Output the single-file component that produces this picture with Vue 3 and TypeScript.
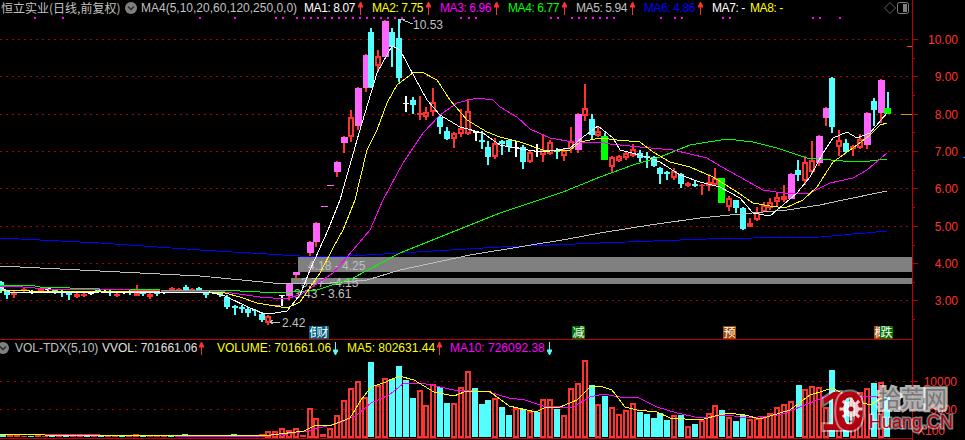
<script setup lang="ts">
type Kind = 'h' | 'p' | 'c' | 'w' | 'g' | 'r'
type Candle = [number, Kind, number, number, number, number]

const candles: Candle[] = [
  [1,'c',282,290,281,293],[7,'c',291,295,290,299],[14,'r',292,295,291,298],[24,'r',289,291,288,292],[32,'w',291,293,290,294],[41,'r',289,292,288,293],
  [48,'w',288,290,287,292],[55,'c',290,292,289,294],[62,'c',291,293,290,297],[69,'c',292,295,291,300],[77,'r',294,297,293,298],[84,'r',294,296,293,297],
  [91,'w',292,294,291,295],[98,'c',289,291,288,292],[105,'w',291,292,290,293],[110,'c',291,293,290,296],[117,'r',294,296,293,297],[124,'w',292,293,291,294],
  [130,'c',291,293,290,295],[137,'r',290,296,285,296],[143,'c',292,294,291,296],[150,'r',294,297,292,299],[157,'c',292,294,291,296],[164,'w',291,293,290,294],
  [172,'r',288,291,287,292],[179,'r',289,291,288,292],[186,'c',287,290,285,291],[192,'r',289,291,288,292],[199,'c',288,291,287,293],[206,'c',292,295,291,298],
  [213,'w',291,293,290,294],[220,'c',293,295,292,297],[227,'c',297,307,295,309],[235,'c',306,308,305,315],[242,'c',307,309,305,313],[248,'c',309,313,307,317],
  [255,'c',310,311,309,316],[262,'c',314,320,312,322],[268,'h',316,323,315,325],[276,'p',305,306,305,306],[282,'w',295,296,295,306],[289,'p',284,296,283,300],
  [296,'p',272,275,272,278],[303,'p',256,257,256,257],[310,'p',242,253,241,258],[316,'p',223,242,222,247],[324,'p',206,207,206,207],[330,'p',185,186,185,186],
  [337,'p',162,172,161,177],[344,'p',137,143,136,153],[351,'h',117,137,110,142],[358,'p',88,126,87,130],[366,'p',55,88,54,92],[371,'c',32,87,28,88],
  [378,'h',56,66,50,72],[385,'p',21,57,20,57],[392,'c',32,47,28,67],[399,'c',38,78,19,82],[406,'w',103,104,96,112],[413,'c',100,105,97,114],
  [420,'r',113,115,96,120],[426,'h',112,117,107,120],[433,'h',102,112,88,116],[440,'c',117,127,114,134],[447,'c',131,139,127,140],[454,'h',133,139,132,148],
  [461,'h',128,134,109,137],[468,'h',111,134,99,135],[476,'w',131,133,131,141],[482,'c',140,142,131,149],[488,'c',147,157,141,165],[495,'h',143,157,138,159],
  [502,'c',141,144,140,155],[509,'c',140,147,139,152],[516,'w',147,148,141,157],[523,'c',147,162,145,169],[530,'h',152,162,150,163],[537,'w',151,152,144,157],
  [543,'h',150,155,134,162],[550,'h',142,154,140,155],[557,'c',150,152,148,159],[564,'h',150,156,148,161],[571,'h',141,149,127,153],[578,'p',114,150,113,153],
  [585,'h',108,116,84,121],[592,'c',119,135,114,140],[598,'h',131,136,126,137],[605,'g',136,160,133,160],[612,'h',157,167,156,172],[619,'h',156,161,155,162],
  [626,'h',153,158,152,160],[633,'h',149,156,144,157],[640,'c',153,158,150,162],[647,'c',156,158,152,168],[654,'c',157,166,156,167],[660,'c',168,174,167,184],
  [667,'c',172,174,171,180],[674,'h',171,178,168,180],[681,'c',174,184,173,188],[688,'r',183,186,182,187],[695,'c',184,186,180,187],[702,'r',185,186,184,195],
  [709,'h',182,186,174,191],[715,'h',178,185,168,185],[722,'g',178,203,178,203],[729,'h',198,207,196,211],[736,'c',200,208,200,213],[743,'c',208,229,207,230],
  [750,'r',223,227,218,227],[757,'h',212,220,207,221],[764,'h',205,212,202,212],[770,'h',202,208,198,210],[777,'h',197,202,193,207],[784,'h',196,200,185,202],
  [791,'p',174,199,173,199],[798,'c',170,175,160,181],[805,'h',162,181,156,185],[812,'h',160,172,141,174],[819,'p',136,163,135,166],[826,'p',108,118,107,126],
  [832,'c',78,127,77,133],[839,'h',140,147,130,156],[846,'c',143,152,139,153],[853,'h',146,149,145,156],[860,'h',139,148,134,149],[867,'p',113,145,112,149],
  [874,'c',101,110,98,126],[881,'p',80,113,79,123],[888,'g',108,114,92,114],
]

const line = (p: number[]): string => p.reduce((s, v, i) => s + v + (i % 2 ? ' ' : ','), '')

const maLines = [
  { cls: 'blue', pts: line([0,238,100,243,200,250,250,253,300,256,350,256,400,253,500,247,600,243,707,239,753,238,820,237,887,231]) },
  { cls: 'gray', pts: line([0,266,100,271,200,276,273,283,330,283,367,280,400,270,470,255,568,239,600,233,650,225,700,218,740,214,787,210,820,205,843,200,887,191]) },
  { cls: 'green', pts: line([0,285,30,285,40,287,100,289,160,290,240,291,280,293,317,290,353,278,400,253,500,213,530,203,563,192,600,177,633,165,660,157,690,145,727,139,753,142,777,148,807,158,843,161,870,161,887,159]) },
  { cls: 'magenta', pts: line([0,286,10,286,60,290,100,289,160,291,225,292,260,297,285,299,300,295,333,273,353,250,370,230,383,200,403,163,423,133,440,115,457,103,477,98,493,100,500,107,517,117,530,129,550,138,573,142,600,142,610,144,640,147,673,150,707,158,720,166,740,177,763,190,783,193,810,193,830,183,853,178,867,170,887,153]) },
  { cls: 'yellow', pts: line([0,290,30,291,100,291,160,292,225,293,240,297,257,303,287,308,300,302,320,273,333,248,343,230,355,200,367,150,377,130,387,103,397,85,413,73,422,72,437,80,450,100,467,120,487,132,500,137,520,142,543,150,570,150,580,142,600,138,617,140,640,142,653,152,670,162,690,167,713,177,737,192,753,203,770,206,785,208,803,200,817,187,833,162,853,148,870,135,880,125,887,123]) },
  { cls: 'white', pts: line([0,287,10,292,40,292,60,293,100,292,160,293,210,292,225,296,250,308,262,313,275,313,287,311,300,295,310,270,328,230,340,200,359,133,377,73,392,46,400,50,415,78,427,100,440,115,460,127,483,133,500,145,520,149,543,152,570,148,583,137,598,126,613,138,620,150,647,157,660,162,680,175,700,182,720,187,740,198,753,213,770,216,783,205,797,193,810,177,823,153,833,138,847,132,857,138,870,133,887,113]) },
]

const dots = [34,62,199,234,275,282,296,303,310,317,324,331,338,345,352,359,366,373,380,387,394,401,413,460,468,475,550,557,571,578,585,592,599,606,613,660,674,681,722,729,812,819,839]
const grid = [39,76,114,151,188,226,263,300]
const labels = [['10.00',39],['9.00',76],['8.00',114],['7.00',151],['6.00',188],['5.00',226],['4.00',263],['3.00',300]] as [string, number][]
const minor = [58,95,132,170,207,245,282,319]

const bands = [
  { x: 298, y: 257, h: 15 },
  { x: 291, y: 278, h: 6 },
]
const rangeTexts = [
  { x: 308, y: 270, t: '4.18 - 4.25' },
  { x: 301, y: 287, t: '3.77 - 4.15' },
  { x: 294, y: 298, t: '3.43 - 3.61' },
]
const markers = [
  { x: 309, w: 13, c: 'teal', t: '倒' },
  { x: 316, w: 13, c: 'teal', t: '财' },
  { x: 572, w: 13, c: 'leaf', t: '减' },
  { x: 723, w: 13, c: 'rust', t: '预' },
  { x: 874, w: 13, c: 'rust', t: '概' },
  { x: 880, w: 13, c: 'leaf', t: '跌' },
]

const maItems = [
  { label: 'MA1: 8.07', cls: 'white' },
  { label: 'MA2: 7.75', cls: 'yellow' },
  { label: 'MA3: 6.96', cls: 'magenta' },
  { label: 'MA4: 6.77', cls: 'green' },
  { label: 'MA5: 5.94', cls: 'gray' },
  { label: 'MA6: 4.86', cls: 'blue' },
]

type Bar = [number, 0 | 1, number]
const smallBars: Bar[] = [
  [3,1,434],[10,0,435],[17,0,435],[24,0,436],[31,1,436],[38,0,435],[45,0,436],[52,1,436],[59,0,435],[66,1,436],[73,0,435],[80,0,435],[87,1,436],[94,0,436],[101,1,435],
  [108,0,435],[115,0,435],[122,1,436],[129,0,435],[136,0,434],[143,1,435],[150,0,435],[157,0,435],[164,0,436],[171,1,435],[178,0,436],[185,1,434],[192,0,436],[199,0,435],[206,1,436],
  [213,0,436],[220,1,436],[227,1,435],[234,1,434],[241,1,436],[248,1,437],[255,0,435],[262,0,434],[268,0,431],
]
const bars: Bar[] = [
  ...smallBars,
  [275,0,431],[282,0,428],[289,0,430],[296,0,428],[303,0,435],[310,0,408],[316,0,418],[323,0,434],[330,0,428],[337,0,415],[344,0,400],[351,0,388],[358,0,381],[365,0,397],
  [371,1,362],[378,0,385],[385,0,378],[392,1,379],[399,1,366],[406,1,380],[413,1,398],[420,0,390],[426,0,405],[433,0,384],[440,1,387],[447,1,403],[454,0,403],[461,0,387],
  [468,0,371],[475,1,388],[482,1,404],[488,1,400],[495,0,398],[502,1,407],[509,1,415],[516,0,408],[523,1,409],[530,0,411],[537,1,412],[543,0,399],[550,0,399],[557,1,409],
  [564,0,415],[571,0,388],[578,0,383],[585,0,360],[592,1,385],[598,0,404],[605,1,396],[612,0,407],[619,0,414],[626,0,410],[633,0,403],[640,1,412],[647,1,414],[654,1,418],
  [660,1,413],[667,1,420],[674,0,415],[681,1,415],[688,0,426],[695,1,424],[702,0,420],[709,0,413],[715,0,405],[722,1,410],[729,0,417],[736,1,421],[743,1,415],[750,0,419],
  [757,0,418],[763,0,417],[770,0,413],[777,0,407],[784,0,404],[791,0,401],[799,1,385],[805,0,389],[812,0,386],[819,0,387],[826,0,407],[832,1,370],[839,0,392],[846,1,398],
  [853,0,400],[860,0,392],[867,0,388],[874,1,383],[881,0,382],[887,1,397],
]
const volYellow = line([0,434,45,435,250,435,271,435,304,431,314,426,332,425,350,418,361,400,371,387,386,382,399,376,414,380,434,392,454,396,464,392,489,391,509,406,536,412,546,407,560,407,577,400,590,387,600,386,612,390,625,407,637,410,657,412,670,418,700,420,727,413,745,415,760,419,790,410,810,395,833,388,853,400,870,405,882,398])
const volMagenta = line([0,434,45,434,100,435,250,437,286,434,307,431,339,423,357,415,371,403,389,395,404,383,421,383,454,390,489,392,509,398,525,400,543,406,560,407,573,407,590,397,603,394,620,397,637,397,657,407,677,413,700,418,727,415,747,418,780,415,810,403,830,395,853,396,877,397])

const gearTeeth = [0, 45, 90, 135, 180, 225, 270, 315]
</script>

<template>
  <div class="screen">
    <section class="pane">
      <header class="head">
        <span class="title">恒立实业(日线,前复权)</span>
        <svg class="drop" width="12" height="12" viewBox="0 0 12 12"><circle cx="6" cy="6" r="6" fill="#808080" /><path d="M3 4.5 6 7.5 9 4.5" fill="none" stroke="#303030" stroke-width="1.6" /></svg>
        <span class="formula">MA4(5,10,20,60,120,250,0,0)</span>
        <span v-for="m in maItems" :key="m.label" class="ma" :class="m.cls">
          <span class="tight">{{ m.label }}</span>
          <svg class="arrow" width="5" height="13" viewBox="0 0 5 13"><path d="M2.5 13V1M0 5 2.5 0 5 5Z" fill="#ff3232" stroke="#ff3232" /></svg>
        </span>
        <span class="ma short white"><span class="tight">MA7: -</span></span>
        <span class="ma short yellow"><span class="tight">MA8: -</span></span>
        <span class="tools">
          <svg width="12" height="12" viewBox="0 0 12 12"><path d="M6 .5 11.5 6 6 11.5 .5 6Z" fill="none" stroke="#606060" /></svg>
          <svg width="12" height="12" viewBox="0 0 12 12"><rect x=".5" y=".5" width="11" height="11" rx="2" fill="none" stroke="#808080" /><rect x="6" y="2" width="4" height="8" fill="#808080" /></svg>
        </span>
      </header>
      <svg class="canvas" width="965" height="324" viewBox="0 16 965 324">
        <line v-for="y in grid" :key="y" class="dot-grid" x1="0" :y1="y" x2="912" :y2="y" />
        <rect v-for="b in bands" :key="b.y" class="band" :x="b.x" :y="b.y" :width="912 - b.x" :height="b.h" />
        <text v-for="r in rangeTexts" :key="r.t" class="range" :x="r.x" :y="r.y">{{ r.t }}</text>
        <rect v-for="d in dots" :key="d" class="top-dot" :x="d" y="17" width="2" height="2" />
        <g v-for="c in candles" :key="c[0]">
          <rect :class="'w-' + c[1]" :x="c[0] - 1" :y="c[4]" width="2" :height="c[5] - c[4]" />
          <rect v-if="c[1] === 'h'" class="hollow" :x="c[0] - 2" :y="c[2] + 1" width="4" :height="c[3] - c[2] - 2" />
          <rect v-else-if="c[1] === 'p'" class="pink" :x="c[0] - 3" :y="c[2]" width="7" :height="c[3] - c[2]" />
          <rect v-else-if="c[1] === 'g'" class="lime" :x="c[0] - 4" :y="c[2]" width="7" :height="c[3] - c[2]" />
          <rect v-else :class="'b-' + c[1]" :x="c[0] - 3" :y="c[2]" width="6" :height="c[3] - c[2]" />
        </g>
        <polyline v-for="l in maLines" :key="l.cls" class="ma-line" :class="'s-' + l.cls" :points="l.pts" />
        <text class="range" x="413" y="29">10.53</text>
        <path class="pointer" d="M400 19 413 24M400 19V23M400 19H405" />
        <text class="range" x="282" y="327">2.42</text>
        <path class="pointer" d="M270 322H280M270 322 273 320M270 322 273 324" />
        <g v-for="m in markers" :key="m.t">
          <rect :class="m.c" :x="m.x" y="326" :width="m.w" height="13" />
          <text class="marker" :x="m.x + 0.5" y="337">{{ m.t }}</text>
        </g>
        <line class="now" x1="901" y1="114" x2="912" y2="114" />
        <line class="axis" x1="0" y1="339.5" x2="912" y2="339.5" />
        <line class="axis" x1="912.5" y1="16" x2="912.5" y2="340" />
        <line v-for="y in grid" :key="'t' + y" class="axis" x1="912" :y1="y" x2="918" :y2="y" />
        <line v-for="y in minor" :key="'m' + y" class="axis" x1="912" :y1="y" x2="915" :y2="y" />
        <line class="bright" x1="907" y1="46" x2="912" y2="46" />
        <text v-for="l in labels" :key="l[0]" class="tick" x="958" :y="l[1] + 4.5">{{ l[0] }}</text>
        <line class="blue-mark" x1="963" y1="157.5" x2="965" y2="157.5" />
      </svg>
    </section>
    <section class="pane">
      <header class="head vol">
        <svg class="drop-vol" width="9" height="12" viewBox="3 0 9 12"><circle cx="6" cy="6" r="6" fill="#808080" /><path d="M3 4.5 6 7.5 9 4.5" fill="none" stroke="#303030" stroke-width="1.6" /></svg>
        <span class="formula">VOL-TDX(5,10)</span>
        <span class="v vvol gray-w"><span>VVOL: 701661.06</span><svg class="arrow" width="5" height="13" viewBox="0 0 5 13"><path d="M2.5 13V1M0 5 2.5 0 5 5Z" fill="#ff3232" stroke="#ff3232" /></svg></span>
        <span class="v volume yellow"><span>VOLUME: 701661.06</span><svg class="arrow" width="5" height="13" viewBox="0 0 5 13"><path d="M2.5 0V12M0 8 2.5 13 5 8Z" fill="#54ffff" stroke="#54ffff" /></svg></span>
        <span class="v ma5 yellow"><span>MA5: 802631.44</span><svg class="arrow" width="5" height="13" viewBox="0 0 5 13"><path d="M2.5 13V1M0 5 2.5 0 5 5Z" fill="#ff3232" stroke="#ff3232" /></svg></span>
        <span class="v ma10 magenta"><span>MA10: 726092.38</span><svg class="arrow" width="5" height="13" viewBox="0 0 5 13"><path d="M2.5 0V12M0 8 2.5 13 5 8Z" fill="#54ffff" stroke="#54ffff" /></svg></span>
      </header>
      <svg class="canvas" width="965" height="84" viewBox="0 356 965 84">
        <line class="dot-grid wide" x1="0" y1="381" x2="912" y2="381" />
        <line class="dot-grid wide" x1="0" y1="409" x2="912" y2="409" />
        <g v-for="b in bars" :key="b[0]">
          <rect v-if="b[1]" class="b-c" :x="b[0] - 3" :y="b[2]" width="6" :height="437 - b[2]" />
          <rect v-else-if="437 - b[2] > 3" class="hollow clear" :x="b[0] - 2" :y="b[2] + 1" width="4" :height="436 - b[2]" />
          <rect v-else class="b-r" :x="b[0] - 3" :y="b[2]" width="6" :height="437 - b[2]" />
        </g>
        <polyline class="ma-line s-magenta" :points="volMagenta" />
        <polyline class="ma-line s-yellow" :points="volYellow" />
        <line class="axis" x1="0" y1="438.5" x2="912" y2="438.5" />
        <line class="axis" x1="912.5" y1="356" x2="912.5" y2="440" />
        <line v-for="y in [381, 409, 395, 423]" :key="y" class="axis" x1="912" :y1="y" :x2="y === 381 || y === 409 ? 918 : 915" :y2="y" />
        <text class="tick" x="957" y="385.5">10000</text>
        <text class="tick" x="957" y="413.5">5000</text>
        <text class="tick" x="945" y="435">X100</text>
        <g class="wm">
          <text class="wm-num" x="820" y="430">1</text>
          <text class="wm-num" x="834" y="430">0</text>
          <g class="gear">
            <circle cx="851" cy="409" r="8" />
            <rect v-for="a in gearTeeth" :key="a" x="849.5" y="397.5" width="3" height="4" :transform="`rotate(${a} 851 409)`" />
            <circle class="gear-hole" cx="851" cy="409" r="2.5" />
          </g>
          <text class="wm-cn" x="878" y="407">拾荒网</text>
          <text class="wm-en" x="869" y="428">Huang.CN</text>
        </g>
      </svg>
    </section>
  </div>
</template>

<style scoped>
.screen {
  width: 965px;
  height: 440px;
  background: #000;
  overflow: hidden;
  display: flex;
  flex-direction: column;
  font-family: "Liberation Sans", "Noto Sans CJK SC", sans-serif;
  font-size: 12px;
  color: #c0c0c0;
}
.pane { display: flex; flex-direction: column; }
.head {
  width: 912px;
  height: 16px;
  border-right: 1px solid #c00000;
  display: flex;
  align-items: center;
  white-space: nowrap;
  line-height: 16px;
}
.title { margin-left: 1px; width: 124px; flex: none; font-family: "Noto Sans CJK SC", "Liberation Sans", sans-serif; }
.drop { flex: none; margin-right: 4px; }
.formula { flex: none; width: 163px; }
.ma { flex: none; width: 68px; display: flex; align-items: center; gap: 3px; }
.ma.short { width: 38px; }
.tight { letter-spacing: -0.4px; }
.arrow { flex: none; }
.tools { margin-left: auto; margin-right: 3px; display: flex; gap: 1px; }
.drop-vol { flex: none; margin-right: 6px; }
.vol .formula { width: 87px; }
.v { flex: none; display: flex; align-items: center; gap: 2px; }
.vvol { width: 115px; }
.volume { width: 130px; }
.ma5 { width: 103px; }
.ma10 { width: 104px; }
.white { color: #fff; }
.gray-w { color: #e0e0e0; }
.yellow { color: #ff0; }
.magenta { color: #f0f; }
.green { color: #0f0; }
.gray { color: #c0c0c0; }
.blue { color: #00f; }
.canvas { display: block; flex: none; shape-rendering: crispEdges; }
.dot-grid { stroke: #b00000; stroke-width: 1; stroke-dasharray: 2 4; }
.dot-grid.wide { stroke-dasharray: 2 5; }
.band { fill: #808080; }
.range { fill: #c0c0c0; font-size: 12px; }
.top-dot { fill: #f0f; }
.w-h, .w-p, .w-r { fill: #ff3232; }
.w-c, .w-g { fill: #54ffff; }
.w-w { fill: #fff; }
.hollow { fill: #000; stroke: #ff3232; stroke-width: 2; }
.hollow.clear { fill: none; }
.pink { fill: #ff64ff; }
.lime { fill: #0f0; }
.b-c { fill: #54ffff; }
.b-r { fill: #ff3232; }
.b-w { fill: #fff; }
.ma-line { fill: none; stroke-width: 1; }
.s-white { stroke: #fff; }
.s-yellow { stroke: #ff0; }
.s-magenta { stroke: #f0f; }
.s-green { stroke: #0f0; }
.s-gray { stroke: #c0c0c0; }
.s-blue { stroke: #0000ff; }
.pointer { fill: none; stroke: #c0c0c0; stroke-width: 1; }
.teal { fill: #006080; }
.leaf { fill: #007000; }
.rust { fill: #a04800; }
.marker { fill: #fff; font-size: 12px; font-family: "Noto Sans CJK SC", sans-serif; }
.now { stroke: #d09000; stroke-width: 1; }
.axis { stroke: #c00000; stroke-width: 1; }
.bright { stroke: #ff3232; stroke-width: 1; }
.tick { fill: #ff3232; font-size: 12px; text-anchor: end; }
.blue-mark { stroke: #0080ff; stroke-width: 1; }
.wm { shape-rendering: auto; }
.wm-num {
  font-size: 56px;
  font-weight: 700;
  fill: #b00010;
  stroke: rgba(255, 255, 255, 0.45);
  stroke-width: 4px;
  paint-order: stroke;
  font-family: "Liberation Sans", sans-serif;
}
.gear { fill: rgba(255, 255, 255, 0.8); }
.gear-hole { fill: #b00010; }
.wm-cn {
  font-size: 23px;
  fill: #777;
  stroke: rgba(255, 255, 255, 0.7);
  stroke-width: 5px;
  paint-order: stroke;
  font-family: "Noto Sans CJK SC", sans-serif;
}
.wm-en {
  font-size: 18px;
  fill: #b00010;
  stroke: rgba(255, 255, 255, 0.5);
  stroke-width: 3px;
  paint-order: stroke;
}
</style>
